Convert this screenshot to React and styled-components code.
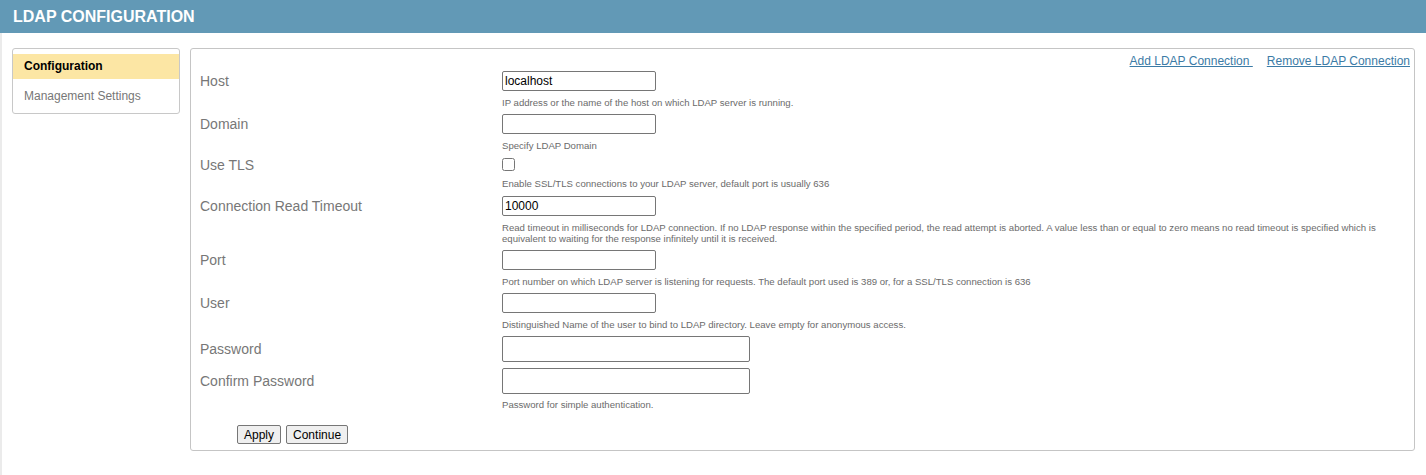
import styled, { createGlobalStyle } from "styled-components";

const GlobalStyle = createGlobalStyle`
  body {
    margin: 0;
    background: #fff;
    font-family: "Liberation Sans", Arial, sans-serif;
  }
`;

const Header = styled.div`
  height: 33px;
  background: #6299b6;
  color: #fff;
  font-size: 16px;
  font-weight: bold;
  line-height: 33px;
  padding-left: 13px;
`;

const Body = styled.div`
  display: flex;
  align-items: flex-start;
  gap: 10px;
  border-left: 2px solid #ebebeb;
  padding: 15px 11px 24px 10px;
`;

const Sidebar = styled.div`
  width: 166px;
  flex-shrink: 0;
  border: 1px solid #c8c8c8;
  border-radius: 3px;
  padding: 5px 0 4px;
  display: flex;
  flex-direction: column;
  gap: 5px;
`;

const NavItem = styled.div`
  height: 25px;
  line-height: 25px;
  padding-left: 11px;
  font-size: 12px;
  font-weight: ${(p) => (p.active ? "bold" : "normal")};
  color: ${(p) => (p.active ? "#000" : "#777")};
  background: ${(p) => (p.active ? "#fce6a4" : "transparent")};
`;

const Panel = styled.div`
  flex: 1;
  border: 1px solid #c5c5c5;
  border-radius: 3px;
  padding: 5px 4px 6px 9px;
`;

const LinksRow = styled.div`
  display: flex;
  justify-content: flex-end;
  gap: 14px;
  height: 14px;
  line-height: 14px;
  margin-bottom: 3px;
`;

const LinkText = styled.a`
  font-size: 12px;
  color: #3b7ba6;
  text-decoration: underline;
  white-space: pre;
  cursor: pointer;
`;

const Row = styled.div`
  display: grid;
  grid-template-columns: 302px 1fr;
  margin-bottom: ${(p) => p.gap ?? 6}px;
`;

const Label = styled.div`
  font-size: 14px;
  color: #777;
  line-height: ${(p) => p.lh ?? 20}px;
`;

const Field = styled.div`
  display: flex;
  flex-direction: column;
  align-items: flex-start;
  padding-right: 6px;
`;

const TextInput = styled.input`
  box-sizing: border-box;
  width: ${(p) => p.w ?? 154}px;
  height: ${(p) => p.h ?? 20}px;
  margin: 0;
  padding: 1px 2px;
  border: 1px solid #767676;
  border-radius: 2px;
  font-family: "Liberation Sans", Arial, sans-serif;
  font-size: 12px;
  color: #000;
  background: #fff;
`;

const Check = styled.input`
  width: 13px;
  height: 13px;
  margin: 1px 0 0;
`;

const Help = styled.div`
  margin-top: ${(p) => p.top ?? 6}px;
  font-size: 9.6px;
  line-height: 11px;
  color: #6b6b6b;
`;

const Buttons = styled.div`
  display: flex;
  gap: 5px;
  margin: 15px 0 0 37px;
`;

const Button = styled.button`
  height: 19px;
  padding: 0 6px;
  border: 1px solid #767676;
  border-radius: 2px;
  background: #efefef;
  font-family: "Liberation Sans", Arial, sans-serif;
  font-size: 12px;
  color: #000;
`;

const rows = [
  { label: "Host", value: "localhost", help: "IP address or the name of the host on which LDAP server is running." },
  { label: "Domain", value: "", help: "Specify LDAP Domain" },
  { label: "Use TLS", check: true, help: "Enable SSL/TLS connections to your LDAP server, default port is usually 636" },
  {
    label: "Connection Read Timeout",
    value: "10000",
    help: "Read timeout in milliseconds for LDAP connection. If no LDAP response within the specified period, the read attempt is aborted. A value less than or equal to zero means no read timeout is specified which is equivalent to waiting for the response infinitely until it is received.",
  },
  { label: "Port", value: "", help: "Port number on which LDAP server is listening for requests. The default port used is 389 or, for a SSL/TLS connection is 636" },
  { label: "User", value: "", help: "Distinguished Name of the user to bind to LDAP directory. Leave empty for anonymous access." },
];

export default function App() {
  return (
    <>
      <GlobalStyle />
      <Header>LDAP CONFIGURATION</Header>
      <Body>
        <Sidebar>
          <NavItem active>Configuration</NavItem>
          <NavItem>Management Settings</NavItem>
        </Sidebar>
        <Panel>
          <LinksRow>
            <LinkText>{"Add LDAP Connection "}</LinkText>
            <LinkText>Remove LDAP Connection</LinkText>
          </LinksRow>
          {rows.map((r) => (
            <Row key={r.label} gap={r.check ? 7 : 6}>
              <Label lh={r.check ? 16 : 20}>{r.label}</Label>
              <Field>
                {r.check ? (
                  <Check type="checkbox" />
                ) : (
                  <TextInput type="text" defaultValue={r.value} />
                )}
                <Help top={r.check ? 7 : 6}>{r.help}</Help>
              </Field>
            </Row>
          ))}
          <Row gap={6}>
            <Label lh={26}>Password</Label>
            <Field>
              <TextInput type="password" w={248} h={26} />
            </Field>
          </Row>
          <Row gap={0}>
            <Label lh={26}>Confirm Password</Label>
            <Field>
              <TextInput type="password" w={248} h={26} />
              <Help top={5}>Password for simple authentication.</Help>
            </Field>
          </Row>
          <Buttons>
            <Button>Apply</Button>
            <Button>Continue</Button>
          </Buttons>
        </Panel>
      </Body>
    </>
  );
}
